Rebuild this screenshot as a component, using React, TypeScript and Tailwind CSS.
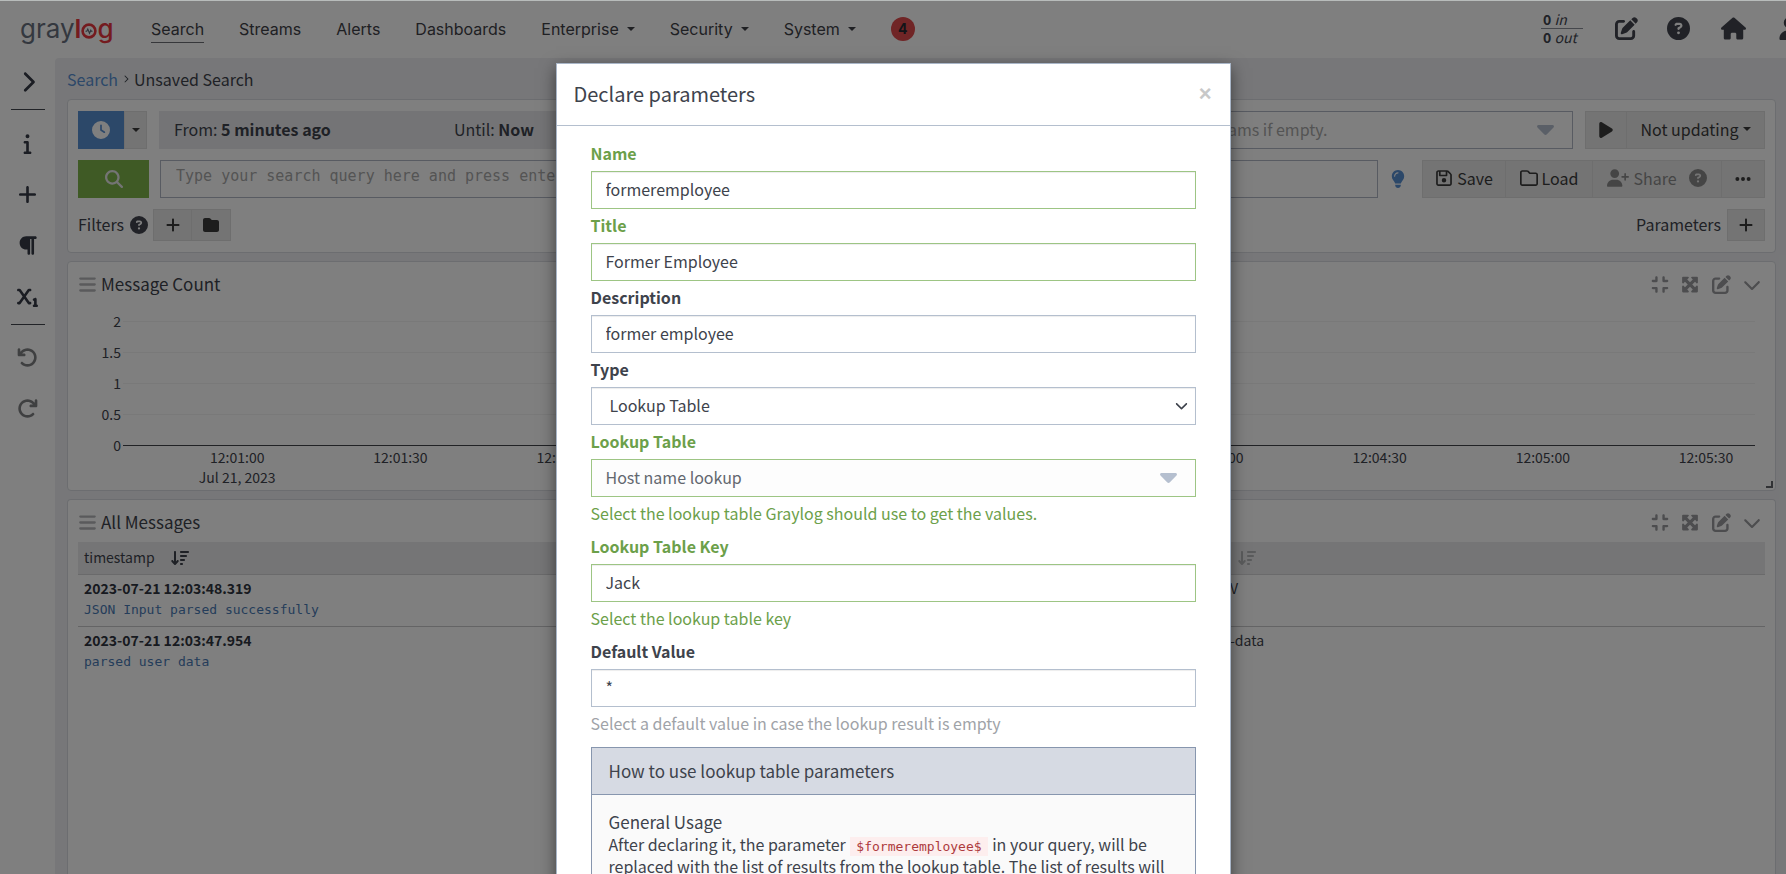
import React from 'react';
import {
  FaArrowDownWideShort, FaArrowRotateLeft, FaArrowRotateRight, FaBars, FaChevronDown, FaChevronRight,
  FaCircleQuestion, FaClock, FaCompress, FaEllipsis, FaFolder, FaHouse, FaInfo, FaLightbulb, FaMagnifyingGlass,
  FaMaximize, FaParagraph, FaPenToSquare, FaPlay, FaPlus, FaRegFloppyDisk, FaRegFolder, FaSubscript, FaUser, FaUserPlus,
} from 'react-icons/fa6';

const NAV = [
  { label: 'Search', active: true },
  { label: 'Streams' },
  { label: 'Alerts' },
  { label: 'Dashboards' },
  { label: 'Enterprise', menu: true },
  { label: 'Security', menu: true },
  { label: 'System', menu: true },
];

const TIMES = ['12:01:00', '12:01:30', '12:02:00', '12:02:30', '12:03:00', '12:03:30', '12:04:00', '12:04:30', '12:05:00', '12:05:30'];
const LEVELS = ['2', '1.5', '1', '0.5', '0'];

const MESSAGES = [
  { time: '2023-07-21 12:03:48.319', text: 'JSON Input parsed successfully', source: 'V' },
  { time: '2023-07-21 12:03:47.954', text: 'parsed user data', source: '-data' },
];

const greyButton = 'flex items-center justify-center border border-[#dcdcdc] bg-[#e8e8e8] text-[#3b3b3b]';
const mono = "font-['DejaVu_Sans_Mono',monospace]";

function Caret() {
  return (
    <svg viewBox="0 0 8 4" className="h-1 w-2 shrink-0" fill="currentColor" aria-hidden="true">
      <path d="M0 0h8L4 4z" />
    </svg>
  );
}

function SelectArrow() {
  return (
    <svg viewBox="0 0 17 10" className="h-[10px] w-[17px] shrink-0 text-[#b5bfcf]" fill="currentColor" aria-hidden="true">
      <path d="M1.5 0h14a1.4 1.4 0 0 1 1 2.4l-6.6 6.9a2 2 0 0 1-2.8 0L.5 2.400A1.4 1.4 0 0 1 1.500 0z" />
    </svg>
  );
}

function Logo() {
  return (
    <a href="#home" aria-label="graylog" className="flex w-[131px] items-center font-['Inter',sans-serif] text-[26px] leading-[30px] text-[#69717f]">
      <span>gray</span>
      <span className="flex items-center text-[#e8373e]">
        <span className="font-semibold">l</span>
        <svg viewBox="0 0 16 16" className="mt-1 h-4 w-4" fill="none" aria-hidden="true">
          <circle cx="8" cy="8" r="6.400" stroke="#e8373e" strokeWidth="2.600" />
          <path d="M4.500 8.300h1.300l1-2.200 1.700 4.200 1.300-3 .6 1h1.100" stroke="#5e6675" strokeWidth="1.100" />
        </svg>
        <span className="font-medium">g</span>
      </span>
    </a>
  );
}

function Header() {
  return (
    <header className="flex h-[57px] items-center overflow-hidden pb-0.5 pl-5 text-[#252d47]">
      <Logo />
      <nav className="flex flex-1 items-center gap-[35px] font-['Inter',sans-serif] text-[16px] leading-6 text-[#3e4147]">
        {NAV.map((item) => (
          <a
            key={item.label}
            href={`#${item.label.toLowerCase()}`}
            className={item.active ? 'border-b border-[#6c6f75] pt-0.5 pb-px' : 'flex items-center gap-2'}
          >
            {item.label}
            {item.menu && <Caret />}
          </a>
        ))}
        <span className="flex h-6 w-6 items-center justify-center rounded-full bg-[#e04a4c] text-[14px] font-bold text-[#252830]">4</span>
      </nav>
      <div className="flex shrink-0 items-center text-[23px] text-[#42454f]">
        <div className="mr-8 w-[42px] text-[14px] leading-[17px]">
          <div className="border-b border-[#8b8f98] pl-0.5"><b>0</b> <i>in</i></div>
          <div className="pl-0.5"><b>0</b> <i>out</i></div>
        </div>
        <button aria-label="Scratchpad" className="mr-[29px]"><FaPenToSquare /></button>
        <button aria-label="Help" className="mr-[31px]"><FaCircleQuestion /></button>
        <a href="#home" aria-label="Home" className="mr-8 text-[25px]"><FaHouse /></a>
        <button aria-label="User" className="-mr-4 w-6"><FaUser /></button>
      </div>
    </header>
  );
}

function Sidebar() {
  const item = 'flex h-[51px] w-full items-center justify-center';
  return (
    <aside className="flex w-[55px] shrink-0 flex-col items-center text-[21px] text-[#363b47]">
      <button aria-label="Open sidebar" className="mb-1 flex h-[47px] w-full items-center justify-center text-[22px]"><FaChevronRight /></button>
      <hr className="mb-2 w-[34px] border-[#42464f]" />
      <button aria-label="Info" className={item}><FaInfo /></button>
      <button aria-label="Create" className={item}><FaPlus /></button>
      <button aria-label="Highlighting" className={item}><FaParagraph /></button>
      <button aria-label="Fields" className={item}><FaSubscript /></button>
      <hr className="mt-0.5 mb-[7px] w-[34px] border-[#42464f]" />
      <button aria-label="Undo" className={`${item} text-[#7f8083]`}><FaArrowRotateLeft /></button>
      <button aria-label="Redo" className={`${item} text-[#7f8083]`}><FaArrowRotateRight /></button>
    </aside>
  );
}

function SearchBar() {
  return (
    <section className="rounded border border-[#d8dae0] bg-white px-[10px] pt-[11px] pb-[10px]">
      <div className="mb-[11px] flex h-[38px]">
        <button aria-label="Time range" className="flex w-[46px] items-center justify-center bg-[#5990d3] text-[18px] text-white"><FaClock /></button>
        <button aria-label="Time range presets" className={`${greyButton} w-[23px]`}><Caret /></button>
        <div className="ml-3 flex flex-[590] items-center bg-[#e8e9ec] px-[15px] pb-0.5">
          <div className="w-[280px]">From: <b>5 minutes ago</b></div>
          <div>Until: <b>Now</b></div>
        </div>
        <div className="ml-3 flex flex-[810] items-center border border-[#b0b6c4] px-3 pr-[18px]">
          <input
            aria-label="Streams"
            placeholder="Select streams the search should include. Searches in all streams if empty."
            className="min-w-0 flex-1 pb-0.5 placeholder:text-[#a8a8a8]"
          />
          <SelectArrow />
        </div>
        <button aria-label="Play" className={`${greyButton} ml-3 w-[42px] text-[18px]`}><FaPlay /></button>
        <button className={`${greyButton} -ml-px w-[139px] gap-1 pb-0.5`}>Not updating<Caret /></button>
      </div>
      <div className="mb-[11px] flex h-[38px]">
        <button aria-label="Run search" className="flex w-[71px] items-center justify-center bg-[#7eb54a] text-[18px] text-[#e8e8e8]"><FaMagnifyingGlass /></button>
        <input
          aria-label="Search query"
          placeholder="Type your search query here and press enter"
          className={`ml-[11px] min-w-0 flex-1 border border-[#b0b6c4] px-[15px] pb-1.5 ${mono} text-[15px] placeholder:text-[#a8a8a8]`}
        />
        <span className="flex w-11 items-center justify-center pr-1 text-[18px] text-[#5990d3]"><FaLightbulb /></span>
        <button className={`${greyButton} w-[84px] gap-1 pb-0.5`}><FaRegFloppyDisk className="shrink-0 text-[18px]" />Save</button>
        <button className={`${greyButton} -ml-px w-[88px] gap-1 pb-0.5`}><FaRegFolder className="shrink-0 text-[18px]" />Load</button>
        <button disabled className={`${greyButton} -ml-px w-[130px] gap-1 bg-[#dcdcdc] pb-0.5 text-[#8b8b8b]`}>
          <FaUserPlus className="shrink-0 text-[22px]" />Share<FaCircleQuestion className="ml-2 shrink-0 text-[18px]" />
        </button>
        <button aria-label="More" className={`${greyButton} -ml-px w-11 text-[18px]`}><FaEllipsis /></button>
      </div>
      <div className="mb-px flex h-8 items-center">
        <span className="pb-0.5">Filters</span>
        <FaCircleQuestion className="mr-[5px] ml-1.5 text-[18px] text-[#42454f]" />
        <button aria-label="Add filter" className={`${greyButton} h-8 w-[39px]`}><FaPlus /></button>
        <button aria-label="Load filter" className={`${greyButton} -ml-px h-8 w-10`}><FaFolder /></button>
        <span className="mr-1.5 ml-auto pb-0.5">Parameters</span>
        <button aria-label="Add parameter" className={`${greyButton} h-8 w-[38px]`}><FaPlus /></button>
      </div>
    </section>
  );
}

function WidgetTitle({ title }: { title: string }) {
  return (
    <div className="flex h-[42px] items-center pt-0.5">
      <FaBars className="mr-1 text-[19px] text-[#b4b5b8]" />
      <h2 className="flex-1 text-[17px]">{title}</h2>
      <div className="flex items-center gap-3 pr-1 text-[19px] text-[#9a9b9e]">
        <button aria-label="Focus" className="flex w-[18px] justify-center"><FaCompress /></button>
        <button aria-label="Maximize" className="flex w-[18px] justify-center"><FaMaximize /></button>
        <button aria-label="Edit" className="flex w-[20px] justify-center"><FaPenToSquare /></button>
        <button aria-label="Actions" className="flex w-[18px] justify-center"><FaChevronDown /></button>
      </div>
    </div>
  );
}

function Chart() {
  return (
    <div className="pt-[17px] pr-[10px] pl-[45px]">
      <svg className="h-[169px] w-full overflow-visible" fill="#3e434c" fontSize="14" role="img" aria-label="Message count over time">
        {LEVELS.map((level, i) => (
          <g key={level}>
            <line x1="0" x2="100%" y1={31 * i + 0.5} y2={31 * i + 0.5} stroke={level === '0' ? '#42454a' : '#f2f2f3'} />
            <text x="-2" y={31 * i + 6} textAnchor="end">{level}</text>
          </g>
        ))}
        {TIMES.map((time, i) => (
          <text key={time} x={`${7 + 10 * i}%`} y="142" textAnchor="middle">{time}</text>
        ))}
        <text x="7%" y="162" textAnchor="middle">Jul 21, 2023</text>
      </svg>
    </div>
  );
}

function Messages() {
  return (
    <table className="w-full border-collapse text-left text-[14px] leading-[21px]">
      <thead>
        <tr className="h-8 border-b border-[#d5d5d7] bg-[#ebebec]">
          <th className="px-1.5 font-normal">
            <span className="flex items-center gap-4">timestamp <FaArrowDownWideShort className="text-[18px]" /></span>
          </th>
          <th className="w-[535px] pl-2"><FaArrowDownWideShort className="text-[18px] text-[#b5b6b8]" /></th>
        </tr>
      </thead>
      <tbody>
        {MESSAGES.map((message) => (
          <tr key={message.time} className="border-b border-[#c8c8ca] align-top last:border-0">
            <td className="px-1.5 pt-[3px] pb-[5px]">
              <b className="block text-[#2f3440]">{message.time}</b>
              <span className={`block ${mono} text-[13px] leading-[22px] text-[#4a7ab5]`}>{message.text}</span>
            </td>
            <td className="pt-[3px]">{message.source}</td>
          </tr>
        ))}
      </tbody>
    </table>
  );
}

type FieldProps = { id: string; label: string; valid?: boolean; help?: string; children: React.ReactNode };

function Field({ id, label, valid, help, children }: FieldProps) {
  return (
    <div>
      <label htmlFor={id} className={`block pt-1 pb-1.5 leading-6 font-bold ${valid ? 'text-[#6ca04a]' : ''}`}>{label}</label>
      {children}
      {help && <p className={`pt-1 pb-[5px] leading-6 ${valid ? 'text-[#6ca04a]' : 'text-[#a0a3a8]'}`}>{help}</p>}
    </div>
  );
}

const control = 'block h-[38px] w-full border bg-white px-[14px] pb-0.5 shadow-[inset_0_1px_1px_rgba(0,0,0,0.075)]';
const plain = 'border-[#b4bfce]';
const success = 'border-[#9dc584]';

function ParametersDialog() {
  return (
    <div role="dialog" aria-modal="true" aria-labelledby="dialog-title" className="w-[675px] max-w-full shrink-0 border border-[#a9b6c8] bg-white shadow-[0_5px_15px_rgba(0,0,0,0.5)]">
      <div className="flex h-[62px] items-center justify-between border-b border-[#b4bfce] pr-[18px] pb-0.5 pl-[17px]">
        <h1 id="dialog-title" className="text-[20px]">Declare parameters</h1>
        <button aria-label="Close" className="font-['Liberation_Sans',sans-serif] text-[22px] font-bold text-[#c8c8c8]">×</button>
      </div>
      <form className="px-[34px] pt-[11px]">
        <Field id="name" label="Name" valid><input id="name" className={`${control} ${success}`} defaultValue="formeremployee" /></Field>
        <Field id="title" label="Title" valid><input id="title" className={`${control} ${success}`} defaultValue="Former Employee" /></Field>
        <Field id="description" label="Description"><input id="description" className={`${control} ${plain}`} defaultValue="former employee" /></Field>
        <Field id="type" label="Type">
          <div className="relative">
            <select id="type" className={`${control} ${plain} appearance-none pl-[18px]`}><option>Lookup Table</option></select>
            <FaChevronDown className="pointer-events-none absolute top-3 right-2 text-[13px]" />
          </div>
        </Field>
        <Field id="table" label="Lookup Table" valid help="Select the lookup table Graylog should use to get the values.">
          <div className={`flex h-[38px] items-center border bg-[#fdfdfd] pr-[18px] pl-[14px] text-[#63676f] ${success}`}>
            <input id="table" className="min-w-0 flex-1 pb-0.5" defaultValue="Host name lookup" />
            <SelectArrow />
          </div>
        </Field>
        <Field id="key" label="Lookup Table Key" valid help="Select the lookup table key"><input id="key" className={`${control} ${success}`} defaultValue="Jack" /></Field>
        <Field id="default" label="Default Value" help="Select a default value in case the lookup result is empty"><input id="default" className={`${control} ${plain}`} defaultValue="*" /></Field>
        <section className="mt-[7px] border border-[#8796ae] bg-[#fafafa]">
          <h2 className="border-b border-[#8796ae] bg-[#d6dae3] px-[17px] py-[11px] text-[17px] leading-6">How to use lookup table parameters</h2>
          <div className="px-[17px] pt-4 pb-10">
            <h3 className="text-[17px] leading-[22px]">General Usage</h3>
            <p className="leading-[22px]">
              After declaring it, the parameter{' '}
              <code className={`mx-px bg-[#fdeeee] px-1.5 py-0.5 ${mono} text-[13px] leading-none text-[#ad3a3d]`}>$formeremployee$</code>
              {' '}in your query, will be replaced with the list of results from the lookup table. The list of results will
            </p>
          </div>
        </section>
      </form>
    </div>
  );
}

export default function App() {
  return (
    <div className="relative flex h-screen flex-col overflow-hidden border-t border-[#b8bcbb] bg-white font-['Noto_Sans_CJK_SC',sans-serif] text-[16px] leading-6 text-[#3e434c]">
      <Header />
      <div className="flex min-h-0 flex-1">
        <Sidebar />
        <main className="flex min-w-0 flex-1 flex-col gap-2 rounded-tl bg-[#eeeff2] pr-[10px] pl-3">
          <nav className="mt-[9px] flex items-center gap-1" aria-label="Breadcrumb">
            <a href="#search" className="text-[#5990d3]">Search</a>
            <FaChevronRight className="text-[8px]" />
            <span>Unsaved Search</span>
          </nav>
          <SearchBar />
          <section className="relative h-[230px] shrink-0 rounded border border-[#d8dae0] bg-white px-[10px]">
            <WidgetTitle title="Message Count" />
            <Chart />
            <span className="absolute right-0.5 bottom-0.5 h-[7px] w-[7px] border-r-2 border-b-2 border-[#63656a]" />
          </section>
          <section className="min-h-0 flex-1 rounded-t border border-b-0 border-[#d8dae0] bg-white px-[10px]">
            <WidgetTitle title="All Messages" />
            <Messages />
          </section>
        </main>
      </div>
      <div className="absolute inset-0 flex items-start justify-center bg-black/50 pt-[62px]">
        <ParametersDialog />
      </div>
    </div>
  );
}
